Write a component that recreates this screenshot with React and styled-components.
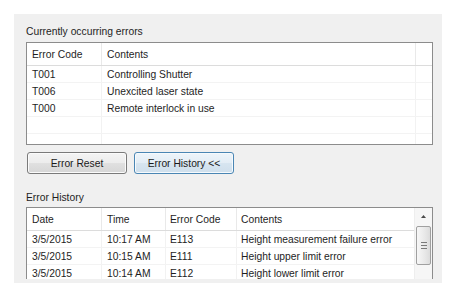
import styled, { createGlobalStyle } from 'styled-components';

const GlobalStyle = createGlobalStyle`
	html, body {
		margin: 0;
		padding: 0;
		background: #ffffff;
	}
	body {
		font-family: 'Liberation Sans', Arial, sans-serif;
		font-size: 10px;
		color: #1e1e1e;
	}
`;

const currentErrors = [
	['T001', 'Controlling Shutter'],
	['T006', 'Unexcited laser state'],
	['T000', 'Remote interlock in use'],
	['', ''],
	['', ''],
];

const history = [
	['3/5/2015', '10:17 AM', 'E113', 'Height measurement failure error'],
	['3/5/2015', '10:15 AM', 'E111', 'Height upper limit error'],
	['3/5/2015', '10:14 AM', 'E112', 'Height lower limit error'],
];

const CURRENT_COLS = '75px 314px 1fr';
const HISTORY_COLS = '75px 64px 71px 1fr';

export default function App() {
	return (
		<>
			<GlobalStyle />
			<Panel>
				<GroupLabel>Currently occurring errors</GroupLabel>
				<ListView>
					<HeaderRow $cols={CURRENT_COLS}>
						<HeadCell>Error Code</HeadCell>
						<HeadCell>Contents</HeadCell>
						<HeadCell />
					</HeaderRow>
					{currentErrors.map((row, i) => (
						<Row key={i} $cols={CURRENT_COLS}>
							<Cell>{row[0]}</Cell>
							<Cell>{row[1]}</Cell>
							<Cell />
						</Row>
					))}
				</ListView>

				<ButtonBar>
					<Button>Error Reset</Button>
					<Button $active>Error History &lt;&lt;</Button>
				</ButtonBar>

				<GroupLabel $spaced>Error History</GroupLabel>
				<HistoryView>
					<HistoryBody>
						<HeaderRow $cols={HISTORY_COLS}>
							<HeadCell>Date</HeadCell>
							<HeadCell>Time</HeadCell>
							<HeadCell $tight>Error Code</HeadCell>
							<HeadCell $tight>Contents</HeadCell>
						</HeaderRow>
						{history.map((row, i) => (
							<Row key={i} $cols={HISTORY_COLS}>
								<Cell>{row[0]}</Cell>
								<Cell>{row[1]}</Cell>
								<Cell $tight>{row[2]}</Cell>
								<Cell $tight>{row[3]}</Cell>
							</Row>
						))}
					</HistoryBody>
					<Scrollbar>
						<ArrowButton>
							<svg width="5" height="3" viewBox="0 0 5 3">
								<polygon points="2.5,0 5,3 0,3" fill="#4a4a4a" />
							</svg>
						</ArrowButton>
						<Thumb>
							<Grip />
							<Grip />
							<Grip />
						</Thumb>
					</Scrollbar>
				</HistoryView>
			</Panel>
		</>
	);
}

const Panel = styled.div`
	margin: 14px 0 0 14px;
	width: 428px;
	height: 269px;
	box-sizing: border-box;
	padding: 11px 10px 0 12px;
	background: #f0f0f0;
	overflow: hidden;
	display: flex;
	flex-direction: column;
`;

const GroupLabel = styled.div`
	height: 14px;
	line-height: 14px;
	margin-top: ${(p) => (p.$spaced ? '17px' : '0')};
	margin-bottom: ${(p) => (p.$spaced ? '2px' : '3px')};
	font-size: 10.3px;
`;

const ListView = styled.div`
	width: 407px;
	height: 103px;
	box-sizing: border-box;
	border: 1px solid #8c8c8c;
	background: #ffffff;
	overflow: hidden;
`;

const HeaderRow = styled.div`
	display: grid;
	grid-template-columns: ${(p) => p.$cols};
	height: 22px;
	border-bottom: 1px solid #dcdcdc;
	background: #ffffff;
`;

const HeadCell = styled.div`
	padding: 2px 0 0 ${(p) => (p.$tight ? '4px' : '5px')};
	line-height: 20px;
	border-right: 1px solid #e9e9e9;
	white-space: nowrap;
	font-size: 10.3px;

	&:last-child {
		border-right: none;
	}
`;

const Row = styled.div`
	display: grid;
	grid-template-columns: ${(p) => p.$cols};
	height: 16px;
	border-bottom: 1px solid #f3f3f3;
`;

const Cell = styled.div`
	padding: 1px 0 0 ${(p) => (p.$tight ? '4px' : '5px')};
	line-height: 15px;
	border-right: 1px solid #f2f2f2;
	white-space: nowrap;
	font-size: 10.3px;

	&:last-child {
		border-right: none;
	}
`;

const ButtonBar = styled.div`
	display: flex;
	gap: 7px;
	margin: 7px 0 0 1px;
`;

const Button = styled.button`
	width: 100px;
	height: 22px;
	padding: 0;
	font-family: inherit;
	font-size: 10.3px;
	color: #1a1a1a;
	border-radius: 3px;
	border: 1px solid ${(p) => (p.$active ? '#4a86b4' : '#7a7a7a')};
	background: ${(p) =>
		p.$active
			? 'linear-gradient(#eef5fa 0%, #e3edf5 50%, #d7e5f0 51%, #cfdfec 100%)'
			: 'linear-gradient(#f4f4f4 0%, #ececec 50%, #e0e0e0 51%, #d6d6d6 100%)'};
	box-shadow: inset 0 0 0 1px ${(p) => (p.$active ? '#f6fafd' : '#fbfbfb')};
`;

const HistoryView = styled.div`
	display: flex;
	width: 407px;
	height: 72px;
	box-sizing: border-box;
	border: 1px solid #8c8c8c;
	border-bottom: none;
	background: #ffffff;
	overflow: hidden;
`;

const HistoryBody = styled.div`
	flex: 1;
`;

const Scrollbar = styled.div`
	width: 17px;
	display: flex;
	flex-direction: column;
	align-items: center;
	background: #f6f6f6;
	border-left: 1px solid #eeeeee;
`;

const ArrowButton = styled.div`
	height: 17px;
	width: 100%;
	display: flex;
	align-items: center;
	justify-content: center;
`;

const Thumb = styled.div`
	margin-top: 1px;
	width: 13px;
	height: 37px;
	border: 1px solid #a0a0a0;
	border-radius: 2px;
	background: linear-gradient(90deg, #f7f7f7, #e8e8e8 60%, #dcdcdc);
	display: flex;
	flex-direction: column;
	align-items: center;
	justify-content: center;
	gap: 2px;
`;

const Grip = styled.div`
	width: 6px;
	height: 1px;
	background: #7a7a7a;
`;
